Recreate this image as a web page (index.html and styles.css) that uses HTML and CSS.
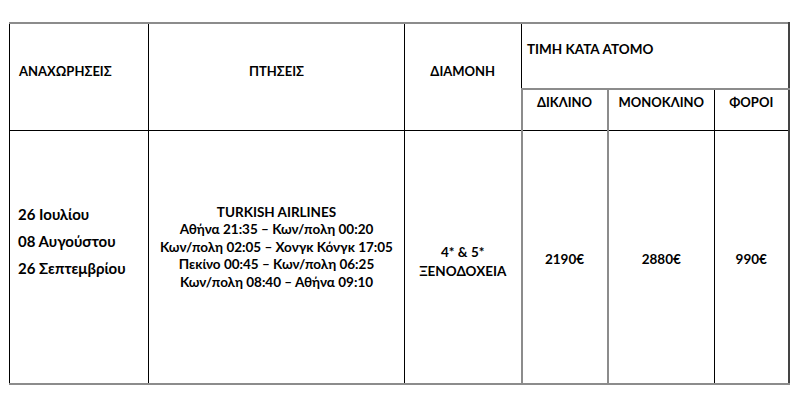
FILE: index.html
```html
<!DOCTYPE html>
<html lang="el">
<head>
<meta charset="utf-8">
<link rel="stylesheet" href="styles.css">
</head>
<body>
<table class="tbl">
  <colgroup>
    <col class="c1"><col class="c2"><col class="c3"><col class="c4"><col class="c5"><col class="c6">
  </colgroup>
  <tr class="r1">
    <th rowspan="2" class="h-dep">ΑΝΑΧΩΡΗΣΕΙΣ</th>
    <th rowspan="2" class="h-mid">ΠΤΗΣΕΙΣ</th>
    <th rowspan="2" class="h-mid h-stay">ΔΙΑΜΟΝΗ</th>
    <th colspan="3" class="h-price">ΤΙΜΗ ΚΑΤΑ ΑΤΟΜΟ</th>
  </tr>
  <tr class="r2">
    <th class="h-sub g-left">ΔΙΚΛΙΝΟ</th>
    <th class="h-sub g-left">ΜΟΝΟΚΛΙΝΟ</th>
    <th class="h-sub g-left b-left">ΦΟΡΟΙ</th>
  </tr>
  <tr class="r3">
    <td class="d-dates">
      <p>26 Ιουλίου</p>
      <p>08 Αυγούστου</p>
      <p>26 Σεπτεμβρίου</p>
    </td>
    <td class="d-flights">
      TURKISH AIRLINES<br>
      Αθήνα 21:35 – Κων/πολη 00:20<br>
      Κων/πολη 02:05 – Χονγκ Κόνγκ 17:05<br>
      Πεκίνο 00:45 – Κων/πολη 06:25<br>
      Κων/πολη 08:40 – Αθήνα 09:10
    </td>
    <td class="d-hotel">4* &amp; 5*<br>ΞΕΝΟΔΟΧΕΙΑ</td>
    <td class="d-price g-left">2190€</td>
    <td class="d-price g-left">2880€</td>
    <td class="d-price g-left b-left">990€</td>
  </tr>
</table>
</body>
</html>
```
FILE: styles.css
```css
html, body {
  margin: 0;
  padding: 0;
  background: #ffffff;
}
body {
  padding: 22px 0 0 9px;
  font-family: "Lato", "Liberation Sans", sans-serif;
  font-weight: 700;
  font-size: 13.5px;
  color: #000;
}
.tbl {
  border-collapse: collapse;
  table-layout: fixed;
  width: 780px;
  border-top: 2px solid #8c8c8c;
  border-left: 1px solid #000;
  border-right: 2px solid #444;
  border-bottom: 2px solid #8c8c8c;
}
.c1 { width: 139px; }
.c2 { width: 256px; }
.c3 { width: 117px; }
.c4 { width: 86px; }
.c5 { width: 107px; }
.c6 { width: 74px; }
th, td {
  padding: 0;
  vertical-align: top;
  font-weight: 700;
  line-height: 17.5px;
  border-left: 1px solid #000;
  text-align: center;
}
th { font-size: 13px; }
.tbl tr.r1 th:first-child, .tbl tr.r3 td:first-child { border-left: none; }
.r1 { height: 66px; }
.r2 { height: 41px; }
.r3 { height: 254px; }
.h-dep {
  text-align: left;
  padding: 39px 0 0 9px;
  border-bottom: 1px solid #000;
}
.h-mid {
  padding-top: 39px;
  border-bottom: 1px solid #000;
}
.h-stay { border-right: 1px solid #000; }
.h-price {
  text-align: left;
  padding: 17px 0 0 5px;
  border-bottom: 2px solid #8c8c8c;
  border-left: 1px solid #000;
  font-size: 13.5px;
}
.h-sub {
  padding-top: 4px;
  border-bottom: 1px solid #000;
}
.g-left { border-left: 2px solid #8c8c8c; }
.b-left { border-left: 1px solid #000; }
.d-dates {
  text-align: left;
  padding: 75px 0 0 8px;
  font-size: 15px;
}
.d-dates p {
  margin: 0 0 9.5px 0;
}
.d-flights {
  padding-top: 73px;
}
.d-hotel {
  padding-top: 112px;
  line-height: 19px;
}
.d-price {
  padding-top: 120px;
}
```
